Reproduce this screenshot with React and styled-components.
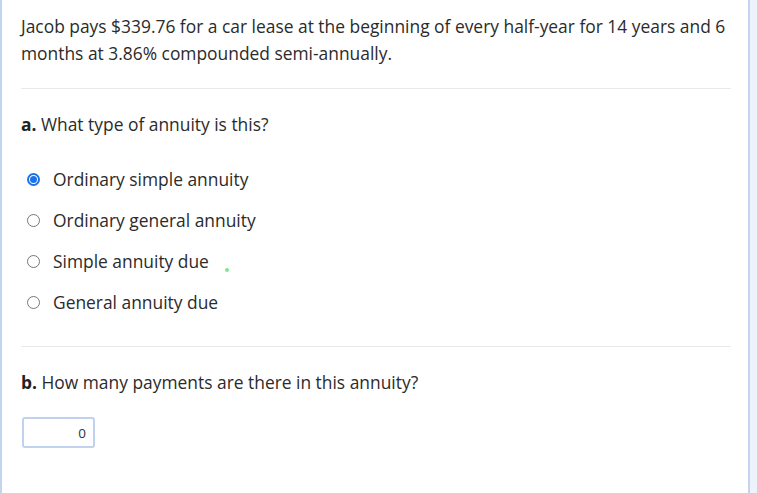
import React from "react";
import styled, { createGlobalStyle } from "styled-components";

const Global = createGlobalStyle`
  html, body { margin: 0; padding: 0; background: #fff; }
  body { font-family: "Open Sans", "Liberation Sans", sans-serif; color: #2b2b2b; }
`;

const Page = styled.div`
  display: flex;
  height: 493px;
  overflow: hidden;
`;

const Panel = styled.div`
  width: 750px;
  flex-shrink: 0;
  border-left: 2px solid #c3d4ee;
  border-right: 2px solid #c3d4ee;
  padding: 13px 17px 0 19px;
  box-sizing: border-box;
  background: #fff;
`;

const Gutter = styled.div`
  flex: 1;
  background: #eef2fa;
`;

const Text = styled.p`
  margin: 0;
  font-size: 17.4px;
  line-height: 27px;
`;

const Divider = styled.hr`
  border: none;
  border-top: 1px solid #e8e8e8;
  margin: ${(p) => p.$mt}px 0 0 0;
`;

const Question = styled.p`
  margin: ${(p) => p.$mt}px 0 0 0;
  font-size: 17.4px;
  line-height: 24px;
  b { font-weight: 700; color: #222; }
`;

const Options = styled.div`
  display: flex;
  flex-direction: column;
  gap: 17px;
  margin-top: 31px;
  padding-left: 6px;
`;

const Option = styled.label`
  display: flex;
  align-items: center;
  gap: 13px;
  font-size: 17.4px;
  line-height: 24px;
  position: relative;
`;

const Radio = styled.span`
  width: 13px;
  height: 13px;
  border-radius: 50%;
  box-sizing: border-box;
  border: ${(p) => (p.$checked ? "2px solid #1a73e8" : "1px solid #767676")};
  display: flex;
  align-items: center;
  justify-content: center;
  background: #fff;
  &::after {
    content: "";
    display: ${(p) => (p.$checked ? "block" : "none")};
    width: 7px;
    height: 7px;
    border-radius: 50%;
    background: #1a73e8;
  }
`;

const Dot = styled.span`
  position: absolute;
  left: 198px;
  top: 19px;
  width: 4px;
  height: 4px;
  border-radius: 50%;
  background: #86e38f;
`;

const Input = styled.div`
  margin-top: 23px;
  margin-left: 1px;
  width: 73px;
  height: 31px;
  box-sizing: border-box;
  border: 2px solid #c0d2ee;
  border-radius: 3px;
  display: flex;
  align-items: center;
  justify-content: flex-end;
  padding-right: 7px;
  font-size: 13.5px;
  color: #333;
`;

const options = [
  "Ordinary simple annuity",
  "Ordinary general annuity",
  "Simple annuity due",
  "General annuity due",
];

export default function App() {
  return (
    <>
      <Global />
      <Page>
        <Panel>
          <Text>
            Jacob pays $339.76 for a car lease at the beginning of every half-year for 14 years and 6
            months at 3.86% compounded semi-annually.
          </Text>
          <Divider $mt={21} />
          <Question $mt={23}>
            <b>a.</b> What type of annuity is this?
          </Question>
          <Options>
            {options.map((o, i) => (
              <Option key={o}>
                <Radio $checked={i === 0} />
                {o}
                {i === 2 && <Dot />}
              </Option>
            ))}
          </Options>
          <Divider $mt={32} />
          <Question $mt={23}>
            <b>b.</b> How many payments are there in this annuity?
          </Question>
          <Input>0</Input>
        </Panel>
        <Gutter />
      </Page>
    </>
  );
}
